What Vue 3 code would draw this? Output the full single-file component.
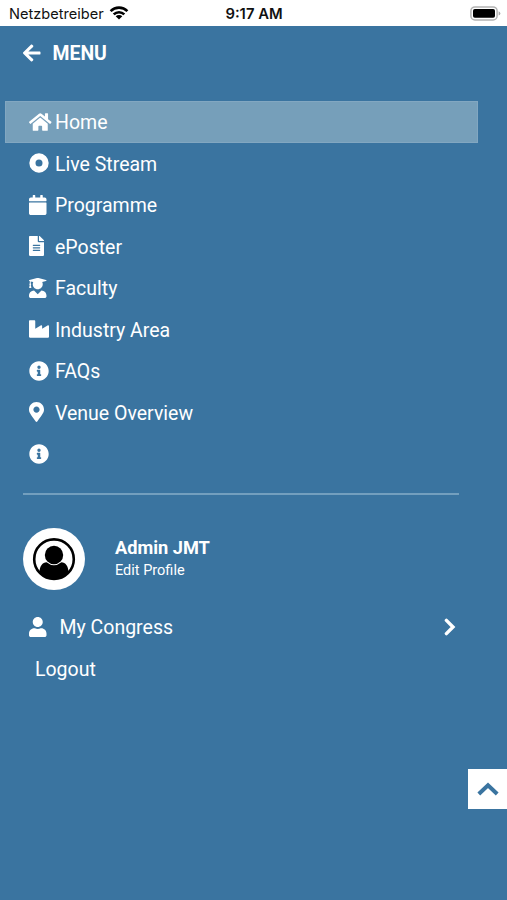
<script setup>
const infoPath = 'M256 8C119.043 8 8 119.083 8 256c0 136.997 111.043 248 248 248s248-111.003 248-248C504 119.083 392.957 8 256 8zm0 110c23.196 0 42 18.804 42 42s-18.804 42-42 42-42-18.804-42-42 18.804-42 42-42zm56 254c0 6.627-5.373 12-12 12h-88c-6.627 0-12-5.373-12-12v-24c0-6.627 5.373-12 12-12h12v-64h-12c-6.627 0-12-5.373-12-12v-24c0-6.627 5.373-12 12-12h64c6.627 0 12 5.373 12 12v100h12c6.627 0 12 5.373 12 12v24z'

const items = [
  { label: 'Home', active: true, w: 576, d: 'M280.37 148.26L96 300.11V464a16 16 0 0 0 16 16l112.06-.29a16 16 0 0 0 15.92-16V368a16 16 0 0 1 16-16h64a16 16 0 0 1 16 16v95.64a16 16 0 0 0 16 16.05L464 480a16 16 0 0 0 16-16V300L295.67 148.26a12.19 12.19 0 0 0-15.3 0zM571.6 251.47L488 182.56V44.05a12 12 0 0 0-12-12h-56a12 12 0 0 0-12 12v72.61L318.47 43a48 48 0 0 0-61 0L4.34 251.47a12 12 0 0 0-1.6 16.9l25.5 31A12 12 0 0 0 45.15 301l235.22-193.74a12.19 12.19 0 0 1 15.3 0L530.9 301a12 12 0 0 0 16.9-1.6l25.5-31a12 12 0 0 0-1.7-16.93z' },
  { label: 'Live Stream', w: 512, d: 'M256 8a248 248 0 1 0 0 496a248 248 0 1 0 0-496zM256 166a90 90 0 1 1 0 180a90 90 0 1 1 0-180z' },
  { label: 'Programme', w: 448, d: 'M12 192h424c6.6 0 12 5.4 12 12v260c0 26.5-21.5 48-48 48H48c-26.5 0-48-21.5-48-48V204c0-6.6 5.4-12 12-12zm436-44v-36c0-26.5-21.5-48-48-48h-48V12c0-6.6-5.4-12-12-12h-40c-6.6 0-12 5.4-12 12v52H160V12c0-6.6-5.4-12-12-12h-40c-6.6 0-12 5.4-12 12v52H48C21.5 64 0 85.5 0 112v36c0 6.6 5.4 12 12 12h424c6.6 0 12-5.4 12-12z' },
  { label: 'ePoster', w: 384, d: 'M224 136V0H24C10.7 0 0 10.7 0 24v464c0 13.3 10.7 24 24 24h336c13.3 0 24-10.7 24-24V160H248c-13.2 0-24-10.8-24-24zm64 236c0 6.6-5.4 12-12 12H108c-6.6 0-12-5.4-12-12v-8c0-6.6 5.4-12 12-12h168c6.6 0 12 5.4 12 12v8zm0-64c0 6.6-5.4 12-12 12H108c-6.6 0-12-5.4-12-12v-8c0-6.6 5.4-12 12-12h168c6.6 0 12 5.4 12 12v8zm0-72v8c0 6.6-5.4 12-12 12H108c-6.6 0-12-5.4-12-12v-8c0-6.6 5.4-12 12-12h168c6.6 0 12 5.4 12 12zm96-114.1v6.1H256V0h6.1c6.4 0 12.5 2.5 17 7l97.9 98c4.5 4.5 7 10.6 7 16.9z' },
  { label: 'Faculty', w: 448, d: 'M319.4 320.6L224 416l-95.4-95.4C57.1 323.7 0 382.2 0 454.4v9.6c0 26.5 21.5 48 48 48h352c26.5 0 48-21.5 48-48v-9.6c0-72.2-57.1-130.7-128.6-133.8zM13.6 79.8l6.4 1.5v58.4c-7 4.2-12 11.5-12 20.3 0 8.4 4.6 15.4 11.1 19.7L3.5 242c-1.7 6.9 2.1 14 7.6 14h41.8c5.5 0 9.3-7.1 7.6-14l-15.6-62.3C51.4 175.4 56 168.4 56 160c0-8.8-5-16.1-12-20.3V87.1l66 15.9c-8.6 17.2-14 36.4-14 57 0 70.7 57.3 128 128 128s128-57.3 128-128c0-20.6-5.3-39.8-14-57l96.3-23.2c18.2-4.4 18.2-27.1 0-31.5l-190.4-46c-13-3.1-26.7-3.1-39.7 0L13.6 48.2c-18.1 4.4-18.1 27.2 0 31.6z' },
  { label: 'Industry Area', w: 512, d: 'M475.115 163.781L336 252.309v-68.28c0-18.916-20.931-30.399-36.885-20.248L160 252.309V56c0-13.255-10.745-24-24-24H24C10.745 32 0 42.745 0 56v400c0 13.255 10.745 24 24 24h464c13.255 0 24-10.745 24-24V184.029c0-18.917-20.931-30.399-36.885-20.248z' },
  { label: 'FAQs', w: 512, d: infoPath },
  { label: 'Venue Overview', w: 384, d: 'M172.268 501.67C26.97 291.031 0 269.413 0 192 0 85.961 85.961 0 192 0s192 85.961 192 192c0 77.413-26.97 99.031-172.268 309.67-9.535 13.774-29.93 13.773-39.464 0zM192 272c44.183 0 80-35.817 80-80s-35.817-80-80-80-80 35.817-80 80 35.817 80 80 80z' },
  { label: '', w: 512, d: infoPath },
]
</script>

<template>
  <div class="screen">
    <div class="status">
      <div class="carrier">
        <span>Netzbetreiber</span>
        <svg class="wifi" viewBox="0 0 20 14">
          <g fill="none" stroke="#000" stroke-width="2.6">
            <path d="M1.6 5.1A12 12 0 0 1 18.4 5.1" />
            <path d="M4.7 8.4A7.5 7.5 0 0 1 15.3 8.4" />
          </g>
          <path d="M10 13.6L6.7 10.3A4.7 4.7 0 0 1 13.3 10.3Z" />
        </svg>
      </div>
      <span class="clock">9:17 AM</span>
      <svg class="battery" viewBox="0 0 31 15">
        <rect x="0.9" y="0.9" width="26.2" height="13" rx="4" fill="#fff" stroke="#b3b3b3" stroke-width="1.5" />
        <rect x="3" y="3" width="22" height="8.8" rx="1.8" />
        <path d="M28.6 5.2Q30.4 6 30.4 7.4T28.6 9.6Z" fill="#aaa" />
      </svg>
    </div>

    <header class="head">
      <svg class="back" viewBox="0 0 448 512"><path d="M257.5 445.1l-22.2 22.2c-9.4 9.4-24.6 9.4-33.9 0L7 273c-9.4-9.4-9.4-24.6 0-33.9L201.4 44.7c9.4-9.4 24.6-9.4 33.9 0l22.2 22.2c9.5 9.5 9.3 25-.4 34.3L136.6 216H424c13.3 0 24 10.7 24 24v32c0 13.3-10.7 24-24 24H136.6l120.5 114.8c9.8 9.3 10 24.8.4 34.3z" /></svg>
      <span class="title">MENU</span>
    </header>

    <nav class="menu">
      <a v-for="(item, i) in items" :key="i" class="item" :class="{ active: item.active }">
        <span class="slot"><svg class="icon" :viewBox="`0 0 ${item.w} 512`"><path fill-rule="evenodd" :d="item.d" /></svg></span>
        <span class="label">{{ item.label }}</span>
      </a>
    </nav>

    <div class="rule"></div>

    <section class="profile">
      <svg class="avatar" viewBox="0 0 62 62">
        <circle cx="31" cy="31" r="31" fill="#fff" />
        <circle cx="31" cy="31.2" r="19.8" fill="none" stroke="#000" stroke-width="2.6" />
        <path d="M16.4 44.3C16.8 37.5 19.5 34.7 23.6 34.2Q31 40.2 38.4 34.2C42.5 34.7 45.2 37.5 45.6 44.3A20 20 0 0 1 16.4 44.3Z" fill="#000" />
        <circle cx="31" cy="27" r="9.2" fill="#000" />
      </svg>
      <div class="who">
        <strong>Admin JMT</strong>
        <span>Edit Profile</span>
      </div>
    </section>

    <a class="congress">
      <svg class="icon" viewBox="0 0 448 512"><path d="M224 256c70.7 0 128-57.3 128-128S294.7 0 224 0 96 57.3 96 128s57.3 128 128 128zm89.6 32h-16.7c-22.2 10.2-46.9 16-72.9 16s-50.6-5.8-72.9-16h-16.7C60.2 288 0 348.2 0 422.4V464c0 26.5 21.5 48 48 48h352c26.5 0 48-21.5 48-48v-41.6c0-74.2-60.2-134.4-134.4-134.4z" /></svg>
      <span class="label">My Congress</span>
      <svg class="next" viewBox="0 0 12 18"><path d="M2.4 2.4L9 9L2.4 15.6" fill="none" stroke="#fff" stroke-width="3.4" stroke-linecap="round" /></svg>
    </a>
    <a class="logout"><span class="label">Logout</span></a>

    <button class="top">
      <svg viewBox="0 0 22 14"><path d="M1.8 12L11 3.2L20.2 12" fill="none" stroke="#3a74a0" stroke-width="4" /></svg>
    </button>
  </div>
</template>

<style>
body { margin: 0; background: #3a74a0; }
</style>

<style scoped>
.screen {
  position: relative;
  width: 507px;
  height: 900px;
  overflow: hidden;
  background: #3a74a0;
  color: #fff;
  font: 19.5px/24px Roboto, sans-serif;
}
.status {
  display: grid;
  grid-template-columns: 1fr auto 1fr;
  align-items: center;
  box-sizing: border-box;
  height: 25.5px;
  padding: 2px 6px 0 9px;
  background: #fff;
  color: #111;
  font: 14.6px/20px Inter, sans-serif;
}
.carrier { display: flex; align-items: center; gap: 5px; }
.wifi { width: 20px; height: 14px; margin-top: -2px; }
.clock { margin-right: 2px; font-size: 14.8px; font-weight: 600; }
.battery { width: 31px; height: 15px; justify-self: end; }
.head {
  display: flex;
  align-items: center;
  gap: 12px;
  height: 54px;
  padding-left: 23px;
  font-size: 19.4px;
  font-weight: 700;
}
.title { padding-top: 2px; }
.back { width: 17.5px; height: 20px; fill: #fff; }
.menu { padding: 21.5px 29px 0 5px; }
.item {
  display: flex;
  align-items: center;
  height: 41.5px;
  padding-left: 24px;
}
.active { background: #769fba; box-shadow: inset 0 0 0 1px #82a7c1; }
.slot { display: flex; width: 26px; }
.icon { height: 20px; fill: #fff; }
.label { padding-top: 3px; }
.rule { height: 2px; margin: 18px 48px 0 23px; background: #739fbe; }
.profile { display: flex; align-items: center; gap: 30px; margin: 33.5px 0 0 23px; }
.avatar { width: 62px; height: 62px; }
.who { display: flex; flex-direction: column; font-size: 14.5px; line-height: 20px; }
.who strong { padding-bottom: 2px; font-size: 18.2px; line-height: 22px; }
.congress { display: flex; align-items: center; height: 41.5px; margin: 16px 51px 0 29px; }
.congress .label { margin-left: 13px; }
.next { width: 12px; height: 18px; margin-left: auto; }
.logout { display: flex; align-items: center; height: 41.5px; padding-left: 35px; }
.top {
  position: absolute;
  right: 0;
  top: 769px;
  display: flex;
  align-items: center;
  justify-content: center;
  width: 39px;
  height: 40px;
  padding: 0;
  border: 0;
  background: #fff;
}
.top svg { width: 22px; height: 14px; }
</style>
